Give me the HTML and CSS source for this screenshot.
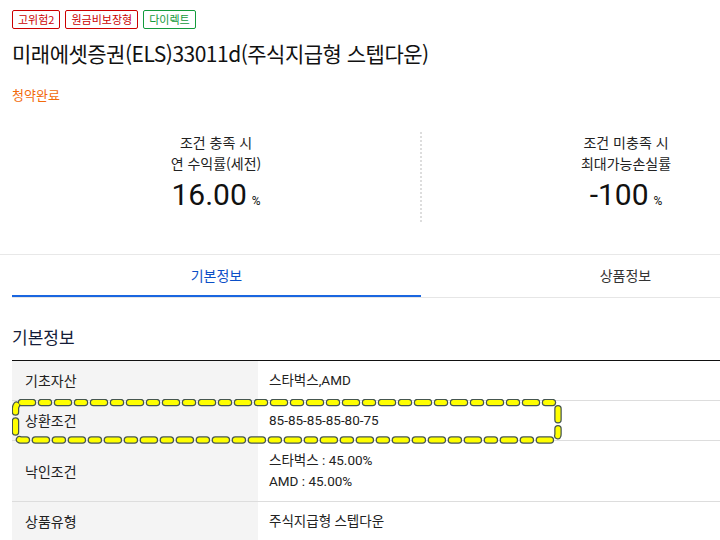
FILE: index.html
```html
<!DOCTYPE html>
<html lang="ko">
<head>
<meta charset="utf-8">
<title>미래에셋증권 ELS</title>
<link rel="stylesheet" href="styles.css">
</head>
<body>
<div class="page">
  <div class="badges">
    <span class="badge badge-red">고위험2</span>
    <span class="badge badge-red">원금비보장형</span>
    <span class="badge badge-green">다이렉트</span>
  </div>
  <h1 class="title">미래에셋증권(ELS)33011d(주식지급형 스텝다운)</h1>
  <div class="status">청약완료</div>

  <div class="stats">
    <div class="stat">
      <div class="stat-label">조건 충족 시<br>연 수익률(세전)</div>
      <div class="stat-value">16.00<span class="unit">%</span></div>
    </div>
    <div class="stat stat-divided">
      <div class="stat-label">조건 미충족 시<br>최대가능손실률</div>
      <div class="stat-value">-100<span class="unit">%</span></div>
    </div>
  </div>

  <div class="tabbar">
    <div class="tabs">
      <div class="tab tab-active">기본정보</div>
      <div class="tab">상품정보</div>
    </div>
  </div>

  <h2 class="section-title">기본정보</h2>
  <div class="info">
    <div class="row">
      <div class="label">기초자산</div>
      <div class="value">스타벅스,AMD</div>
    </div>
    <div class="row">
      <div class="label">상환조건</div>
      <div class="value">85-85-85-85-80-75</div>
    </div>
    <div class="row">
      <div class="label">낙인조건</div>
      <div class="value">스타벅스 : 45.00%<br>AMD : 45.00%</div>
    </div>
    <div class="row">
      <div class="label">상품유형</div>
      <div class="value">주식지급형 스텝다운</div>
    </div>
  </div>
</div>

<svg class="highlight" width="560" height="52" viewBox="0 0 560 52" aria-hidden="true">
  <rect x="3.5" y="3.5" width="542.5" height="37.5" rx="6" ry="6" fill="none" stroke="#46564f" stroke-width="7.5" stroke-linecap="round" stroke-dasharray="11 9 7 9"/>
  <rect x="3.5" y="3.5" width="542.5" height="37.5" rx="6" ry="6" fill="none" stroke="#ffff00" stroke-width="5" stroke-linecap="round" stroke-dasharray="11 9 7 9"/>
</svg>
</body>
</html>
```

FILE: styles.css
```css
html, body {
  margin: 0;
  padding: 0;
  background: #ffffff;
}
body {
  position: relative;
  overflow: hidden;
  width: 720px;
  height: 540px;
  font-family: "Noto Sans CJK KR", "Noto Sans", sans-serif;
  color: #111111;
}
.page {
  width: 818px;
  padding-left: 12px;
}
.badges {
  display: flex;
  gap: 5px;
  padding-top: 10px;
}
.badge {
  display: inline-flex;
  align-items: center;
  height: 17px;
  padding: 0 5px;
  border: 1px solid;
  border-radius: 2px;
  font-size: 11px;
  line-height: 17px;
}
.badge-red {
  color: #cc0000;
  border-color: #cc0000;
}
.badge-green {
  color: #139a3b;
  border-color: #139a3b;
}
.title {
  margin: 9px 0 0;
  font-size: 21px;
  font-weight: 400;
  line-height: 30px;
  color: #111111;
  letter-spacing: -0.5px;
}
.status {
  margin-top: 17px;
  font-size: 13px;
  line-height: 20px;
  color: #f26a0a;
}
.stats {
  display: flex;
  margin-top: 27px;
  margin-bottom: 32px;
}
.stat {
  flex: 1;
  text-align: center;
  padding-bottom: 3px;
}
.stat-divided {
  border-left: 2px dotted #dddddd;
}
.stat-label {
  font-size: 14px;
  line-height: 21px;
  color: #222222;
}
.stat-value {
  margin-top: 3px;
  font-family: Roboto, "Noto Sans", sans-serif;
  font-size: 30px;
  line-height: 36px;
  color: #111111;
}
.unit {
  margin-left: 5px;
  font-size: 12px;
}
.tabbar {
  margin-left: -12px;
  padding-left: 12px;
  border-top: 1px solid #e8e8e8;
}
.tabs {
  display: flex;
  border-bottom: 1px solid #e6e6e6;
}
.tab {
  flex: 1;
  height: 40px;
  line-height: 40px;
  text-align: center;
  font-size: 14px;
  color: #333333;
  border-bottom: 2px solid transparent;
}
.tab-active {
  color: #0b4fc7;
  border-bottom-color: #1a66e0;
}
.section-title {
  margin: 27px 0 11px;
  font-size: 17px;
  font-weight: 400;
  line-height: 24px;
  color: #141c38;
}
.info {
  border-top: 1px solid #111111;
}
.row {
  display: flex;
  border-bottom: 1px solid #dddddd;
}
.label {
  width: 246px;
  box-sizing: border-box;
  padding: 9px 13px;
  background: #f4f4f4;
  font-size: 14px;
  line-height: 21px;
  color: #222222;
  display: flex;
  align-items: center;
}
.value {
  flex: 1;
  padding: 9px 11px;
  font-family: Roboto, "Noto Sans CJK KR", sans-serif;
  font-size: 13.5px;
  line-height: 21px;
  color: #222222;
}
.highlight {
  position: absolute;
  left: 12px;
  top: 399px;
}
```
